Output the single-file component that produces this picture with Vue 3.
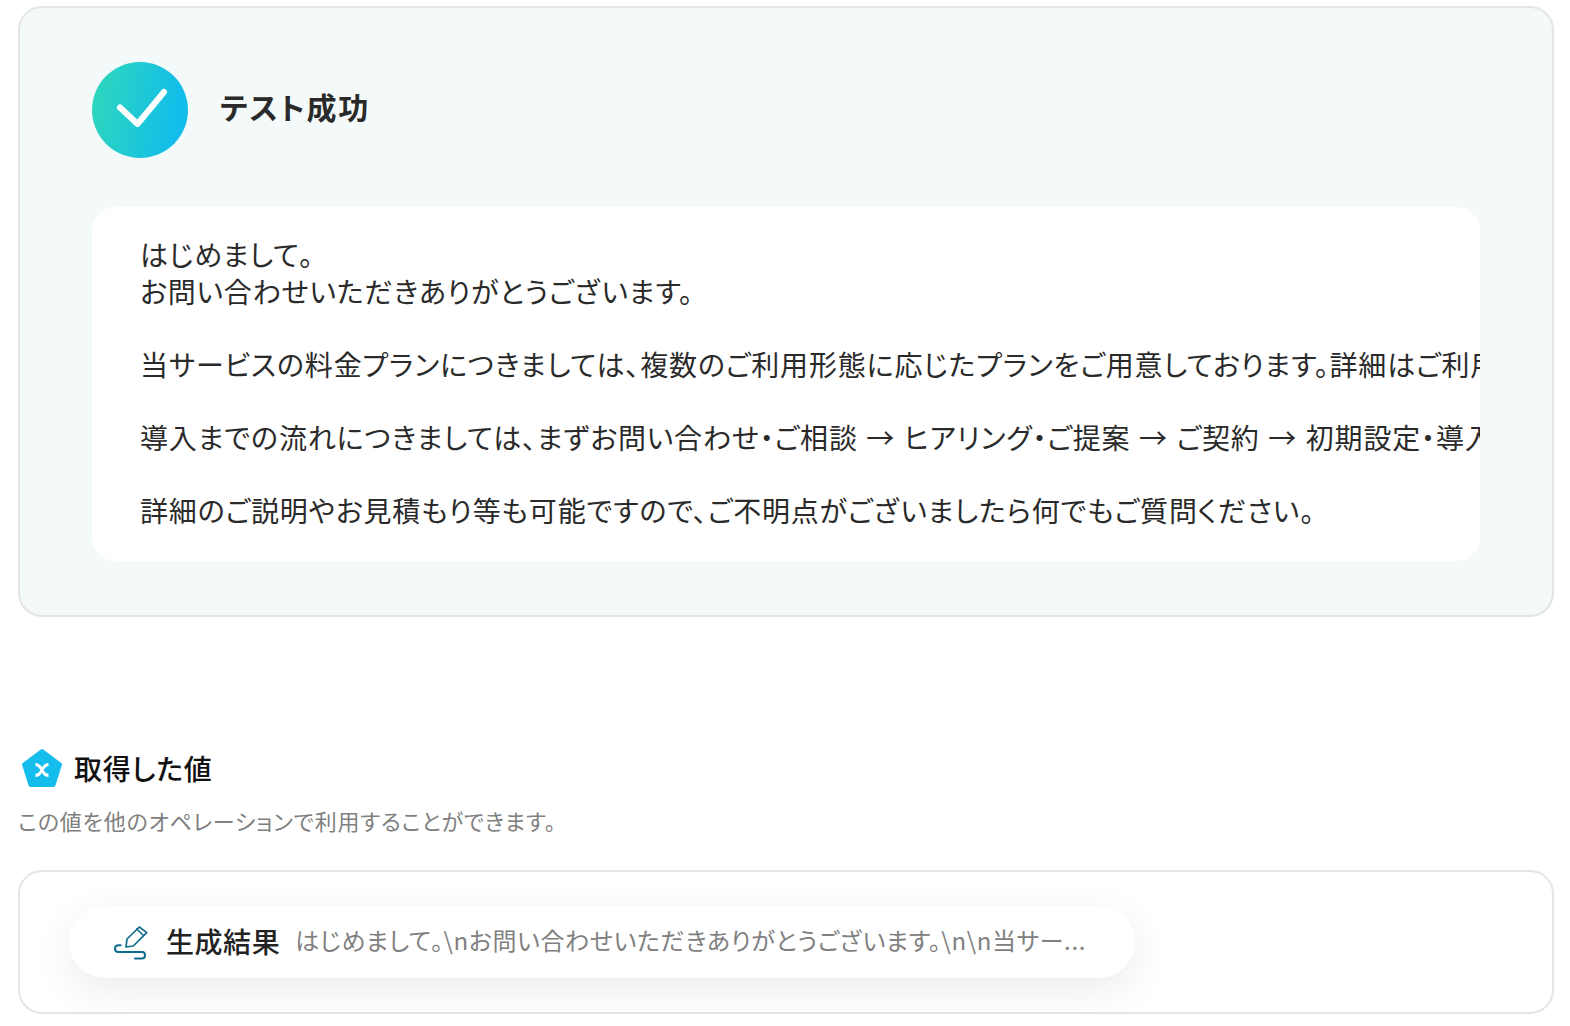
<template>
  <div class="page">
    <section class="result-card">
      <div class="result-head">
        <div class="check-circle">
          <svg width="96" height="96" viewBox="0 0 96 96" fill="none">
            <path d="M28 45.500 L45.500 62 L72 30" stroke="#fff" stroke-width="6" stroke-linecap="round" stroke-linejoin="round" />
          </svg>
        </div>
        <h2 class="result-title">テスト成功</h2>
      </div>
      <div class="result-body">
        <p v-for="(line, i) in lines" :key="i" class="line">{{ line }}</p>
      </div>
    </section>

    <div class="values-head">
      <svg class="pentagon" width="42" height="42" viewBox="0 0 42 42">
        <path d="M21 4 L39 17.500 L32.500 38 L9.500 38 L3 17.500 Z" fill="#14bdeb" stroke="#14bdeb" stroke-width="4" stroke-linejoin="round" />
        <path d="M14.500 17.500 C18.500 17.500 19 20 21 23 C23 26 23.500 28.500 27.500 28.500 M27.500 17.500 C23.500 17.500 23 20 21 23 C19 26 18.500 28.500 14.500 28.500" fill="none" stroke="#fff" stroke-width="2.800" />
      </svg>
      <h3 class="values-title">取得した値</h3>
    </div>
    <p class="values-note">この値を他のオペレーションで利用することができます。</p>

    <section class="values-card">
      <div class="value-pill">
        <svg class="pen" width="36" height="36" viewBox="0 0 36 36" fill="none" stroke="#0f6d8c" stroke-width="1.700" stroke-linecap="round" stroke-linejoin="round">
          <path d="M13 15 L25.300 3 L32.700 8.700 L19.300 22 L12 23 Z" />
          <path d="M22.700 5 L29 11" />
          <path d="M6.700 21.300 H4.500 Q1 21.300 1 24.700 Q1 28 4.500 28 H28 Q31 28 31 31 Q31 34.500 28 34.500 H21" stroke-width="2" />
        </svg>
        <span class="value-name">生成結果</span>
        <span class="value-text">はじめまして。\nお問い合わせいただきありがとうございます。\n\n当サー...</span>
      </div>
    </section>
  </div>
</template>

<script setup>
const lines = [
  'はじめまして。',
  'お問い合わせいただきありがとうございます。',
  '\u00a0',
  '当サービスの料金プランにつきましては、複数のご利用形態に応じたプランをご用意しております。詳細はご利用状況に合わせてご案内いたします。',
  '\u00a0',
  '導入までの流れにつきましては、まずお問い合わせ・ご相談 → ヒアリング・ご提案 → ご契約 → 初期設定・導入となります。',
  '\u00a0',
  '詳細のご説明やお見積もり等も可能ですので、ご不明点がございましたら何でもご質問ください。'
]
</script>

<style>
html, body {
  margin: 0;
  background: #fff;
}
</style>

<style scoped>
.page {
  padding: 6px 16px 0 18px;
  font-family: "Noto Sans CJK JP", "Noto Sans", sans-serif;
  font-feature-settings: "palt";
  color: #222;
}

.result-card {
  box-sizing: border-box;
  height: 611px;
  padding: 54px 72px 0;
  background: #f4f9f9;
  border: 2px solid #e4e6e6;
  border-radius: 24px;
}

.result-head {
  display: flex;
  align-items: center;
  gap: 32px;
}

.check-circle {
  width: 96px;
  height: 96px;
  border-radius: 50%;
  background: linear-gradient(100deg, #2fd9b9 0%, #12bdeb 85%);
}

.check-circle svg {
  display: block;
}

.result-title {
  margin: 0 0 8px;
  font-size: 30px;
  font-weight: 700;
  letter-spacing: 0.06em;
  color: #2a2a2a;
}

.result-body {
  margin-top: 49px;
  box-sizing: border-box;
  height: 354px;
  padding: 29px 0 0 48px;
  background: #fff;
  border-radius: 24px;
  overflow: hidden;
}

.line {
  margin: 0;
  font-size: 28px;
  letter-spacing: 0.03em;
  word-spacing: 1.500px;
  line-height: 36.500px;
  white-space: nowrap;
  color: #2a2a2a;
}

.values-head {
  display: flex;
  align-items: center;
  gap: 11px;
  margin-top: 130px;
  padding-left: 3px;
}

.pentagon {
  display: block;
}

.values-title {
  margin: 0 0 1px;
  font-size: 28px;
  font-weight: 500;
  letter-spacing: 0.03em;
  color: #111;
}

.values-note {
  margin: 15px 0 0;
  font-size: 22px;
  letter-spacing: 0.036em;
  line-height: 32px;
  color: #808080;
}

.values-card {
  box-sizing: border-box;
  height: 144px;
  margin-top: 34px;
  padding: 34px 0 0 49px;
  border: 2px solid #e4e6e6;
  border-radius: 24px;
}

.value-pill {
  display: inline-flex;
  align-items: center;
  box-sizing: border-box;
  width: 1066px;
  height: 72px;
  padding-left: 45px;
  background: #fff;
  border-radius: 36px;
  box-shadow: 0 12px 40px rgba(0, 0, 0, 0.08);
}

.pen {
  flex-shrink: 0;
}

.value-name {
  margin: 0 0 3px 16px;
  font-size: 28px;
  font-weight: 500;
  letter-spacing: 0.02em;
  color: #222;
}

.value-text {
  margin: 0 0 5px 15px;
  font-size: 24px;
  letter-spacing: 0.026em;
  color: #808080;
}
</style>
